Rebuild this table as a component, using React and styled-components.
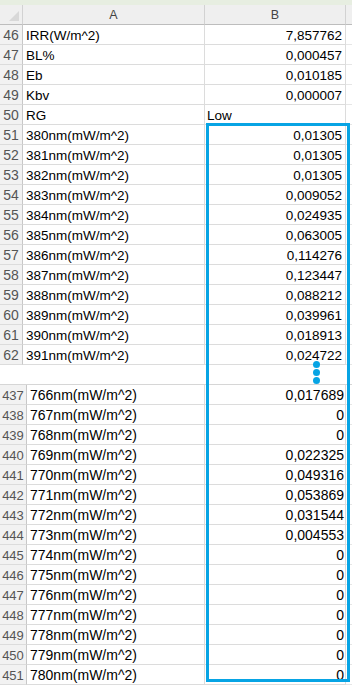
import React from "react";
import styled, { createGlobalStyle } from "styled-components";

const GlobalStyle = createGlobalStyle`
  html, body {
    margin: 0;
    padding: 0;
    background: #fff;
  }
  body {
    font-family: "Liberation Sans", Arial, sans-serif;
  }
`;

const topRows = [
  ["46", "IRR(W/m^2)", "7,857762"],
  ["47", "BL%", "0,000457"],
  ["48", "Eb", "0,010185"],
  ["49", "Kbv", "0,000007"],
  ["50", "RG", "Low", true],
  ["51", "380nm(mW/m^2)", "0,01305"],
  ["52", "381nm(mW/m^2)", "0,01305"],
  ["53", "382nm(mW/m^2)", "0,01305"],
  ["54", "383nm(mW/m^2)", "0,009052"],
  ["55", "384nm(mW/m^2)", "0,024935"],
  ["56", "385nm(mW/m^2)", "0,063005"],
  ["57", "386nm(mW/m^2)", "0,114276"],
  ["58", "387nm(mW/m^2)", "0,123447"],
  ["59", "388nm(mW/m^2)", "0,088212"],
  ["60", "389nm(mW/m^2)", "0,039961"],
  ["61", "390nm(mW/m^2)", "0,018913"],
  ["62", "391nm(mW/m^2)", "0,024722"],
];

const bottomRows = [
  ["437", "766nm(mW/m^2)", "0,017689"],
  ["438", "767nm(mW/m^2)", "0"],
  ["439", "768nm(mW/m^2)", "0"],
  ["440", "769nm(mW/m^2)", "0,022325"],
  ["441", "770nm(mW/m^2)", "0,049316"],
  ["442", "771nm(mW/m^2)", "0,053869"],
  ["443", "772nm(mW/m^2)", "0,031544"],
  ["444", "773nm(mW/m^2)", "0,004553"],
  ["445", "774nm(mW/m^2)", "0"],
  ["446", "775nm(mW/m^2)", "0"],
  ["447", "776nm(mW/m^2)", "0"],
  ["448", "777nm(mW/m^2)", "0"],
  ["449", "778nm(mW/m^2)", "0"],
  ["450", "779nm(mW/m^2)", "0"],
  ["451", "780nm(mW/m^2)", "0"],
];

export default function App() {
  return (
    <>
      <GlobalStyle />
      <Page>
        <TopBar />
        <Sheet $numW={23} $aW={182} $fs={13.5}>
          <Corner>
            <CornerTriangle />
          </Corner>
          <ColHead>A</ColHead>
          <ColHead>B</ColHead>
          <ColHead $last />
          {topRows.map(([n, a, b, text]) => (
            <React.Fragment key={n}>
              <RowNum>{n}</RowNum>
              <CellA>{a}</CellA>
              <CellB $text={text} $pad={3}>{b}</CellB>
              <Filler />
            </React.Fragment>
          ))}
        </Sheet>
        <Gap />
        <Sheet $numW={27} $aW={178} $fs={14} $top>
          {bottomRows.map(([n, a, b]) => (
            <React.Fragment key={n}>
              <RowNum $small>{n}</RowNum>
              <CellA>{a}</CellA>
              <CellB $pad={1}>{b}</CellB>
              <Filler />
            </React.Fragment>
          ))}
        </Sheet>
        <Selection>
          <Dots>
            <Dot />
            <Dot />
            <Dot />
          </Dots>
        </Selection>
      </Page>
    </>
  );
}

const Page = styled.div`
  position: relative;
  width: 352px;
  height: 685px;
  overflow: hidden;
  background: #fff;
`;

const TopBar = styled.div`
  height: 5px;
  background: #e7eee1;
`;

const Sheet = styled.div`
  display: grid;
  grid-template-columns: ${({ $numW }) => $numW}px ${({ $aW }) => $aW}px 141px 1fr;
  grid-auto-rows: 20px;
  font-size: ${({ $fs }) => $fs}px;
  color: #000;
  border-top: ${({ $top }) => ($top ? "1px solid #d6d6d6" : "none")};
`;

const Corner = styled.div`
  position: relative;
  background: #efefef;
  border-right: 1px solid #d2d2d2;
  border-bottom: 1px solid #bdbdbd;
`;

const CornerTriangle = styled.div`
  position: absolute;
  right: 3px;
  bottom: 3px;
  width: 0;
  height: 0;
  border-left: 10px solid transparent;
  border-bottom: 10px solid #d8d8d8;
`;

const ColHead = styled.div`
  background: #efefef;
  border-right: ${({ $last }) => ($last ? "none" : "1px solid #d2d2d2")};
  border-bottom: 1px solid #bdbdbd;
  display: flex;
  align-items: center;
  justify-content: center;
  font-size: 12.5px;
  color: #444;
`;

const RowNum = styled.div`
  background: #f2f2f2;
  border-right: 1px solid #c8c8c8;
  border-bottom: 1px solid #dcdcdc;
  display: flex;
  align-items: center;
  justify-content: center;
  font-size: ${({ $small }) => ($small ? 13 : 14)}px;
  color: #555;
  padding-top: 1px;
`;

const CellA = styled.div`
  border-right: 1px solid #dcdcdc;
  border-bottom: 1px solid #dcdcdc;
  display: flex;
  align-items: center;
  padding-left: 3px;
  padding-top: 1px;
  white-space: nowrap;
  overflow: hidden;
`;

const CellB = styled.div`
  border-right: 1px solid #dcdcdc;
  border-bottom: 1px solid #dcdcdc;
  display: flex;
  align-items: center;
  justify-content: ${({ $text }) => ($text ? "flex-start" : "flex-end")};
  padding: 1px ${({ $pad }) => $pad}px 0 ${({ $text }) => ($text ? 2 : 0)}px;
  white-space: nowrap;
`;

const Filler = styled.div`
  border-bottom: 1px solid #e6e6e6;
`;

const Gap = styled.div`
  height: 19px;
`;

const Selection = styled.div`
  position: absolute;
  left: 206px;
  top: 123px;
  width: 144px;
  height: 559px;
  box-sizing: border-box;
  border: 3px solid #07a4e4;
`;

const Dots = styled.div`
  position: absolute;
  left: 104px;
  top: 235px;
  display: flex;
  flex-direction: column;
  gap: 1px;
`;

const Dot = styled.div`
  width: 7px;
  height: 7px;
  border-radius: 50%;
  background: #07a4e4;
`;
